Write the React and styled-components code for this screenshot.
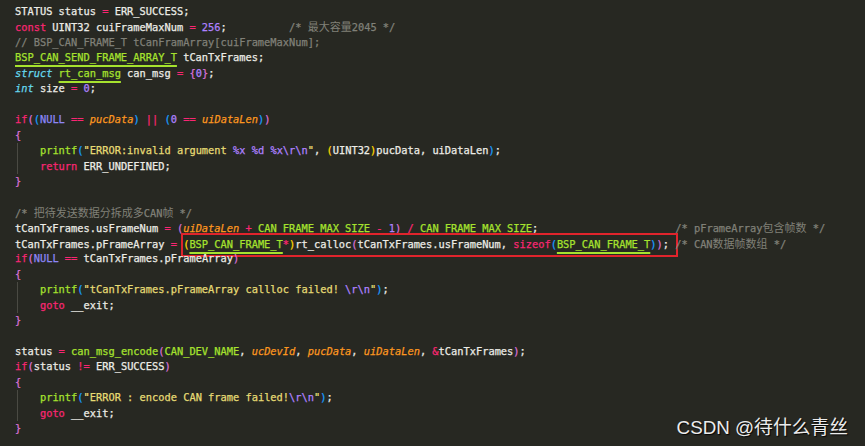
import React from 'react'
import styled, { createGlobalStyle } from 'styled-components'

const GlobalStyle = createGlobalStyle`
  html, body {
    margin: 0;
    padding: 0;
    background: #272822;
  }
`

const COLORS = {
  p: '#ecece6',
  k: '#f92672',
  n: '#ae81ff',
  c: '#808078',
  t: '#a6e22e',
  f: '#a6e22e',
  i: '#66d9ef',
  a: '#fd971f',
  s: '#e6db74',
  e: '#ae81ff',
  u: '#8c86f7',
  g: '#ffd700',
  o: '#da70d6',
  b: '#179fff',
}

// each line is a list of [kind, text]; 'box' wraps the tokens in the red frame
const code = [
  [['p', 'STATUS status '], ['k', '='], ['p', ' ERR_SUCCESS;']],
  [['k', 'const'], ['p', ' UINT32 cuiFrameMaxNum '], ['k', '='], ['p', ' '], ['n', '256'], ['p', ';          '], ['c', '/* 最大容量2045 */']],
  [['c', '// BSP_CAN_FRAME_T tCanFramArray[cuiFrameMaxNum];']],
  [['t', 'BSP_CAN_SEND_FRAME_ARRAY_T'], ['p', ' tCanTxFrames;']],
  [['i', 'struct'], ['p', ' '], ['t', 'rt_can_msg'], ['p', ' can_msg '], ['k', '='], ['p', ' '], ['o', '{'], ['n', '0'], ['o', '}'], ['p', ';']],
  [['i', 'int'], ['p', ' size '], ['k', '='], ['p', ' '], ['n', '0'], ['p', ';']],
  [],
  [['k', 'if'], ['o', '('], ['b', '('], ['u', 'NULL'], ['p', ' '], ['k', '=='], ['p', ' '], ['a', 'pucData'], ['b', ')'], ['p', ' '], ['k', '||'], ['p', ' '], ['b', '('], ['n', '0'], ['p', ' '], ['k', '=='], ['p', ' '], ['a', 'uiDataLen'], ['b', ')'], ['o', ')']],
  [['o', '{']],
  [['p', '    '], ['f', 'printf'], ['b', '('], ['s', '"ERROR:invalid argument '], ['e', '%x'], ['s', ' '], ['e', '%d'], ['s', ' '], ['e', '%x\\r\\n'], ['s', '"'], ['p', ', '], ['g', '('], ['p', 'UINT32'], ['g', ')'], ['p', 'pucData, uiDataLen'], ['b', ')'], ['p', ';']],
  [['p', '    '], ['k', 'return'], ['p', ' ERR_UNDEFINED;']],
  [['o', '}']],
  [],
  [['c', '/* 把待发送数据分拆成多CAN帧 */']],
  [['p', 'tCanTxFrames.usFrameNum '], ['k', '='], ['p', ' '], ['o', '('], ['a', 'uiDataLen'], ['p', ' '], ['k', '+'], ['p', ' '], ['f', 'CAN_FRAME_MAX_SIZE'], ['p', ' '], ['k', '-'], ['p', ' '], ['n', '1'], ['o', ')'], ['p', ' '], ['k', '/'], ['p', ' '], ['f', 'CAN_FRAME_MAX_SIZE'], ['p', ';' + ' '.repeat(22)], ['c', '/* pFrameArray包含帧数 */']],
  [['p', 'tCanTxFrames.pFrameArray '], ['k', '='], ['p', ' '],
    ['box', [['g', '('], ['t', 'BSP_CAN_FRAME_T'], ['k', '*'], ['g', ')'], ['p', 'rt_calloc'], ['o', '('], ['p', 'tCanTxFrames.usFrameNum, '], ['k', 'sizeof'], ['b', '('], ['t', 'BSP_CAN_FRAME_T'], ['b', ')'], ['o', ')'], ['p', ';']]],
    ['p', ' '], ['c', '/* CAN数据帧数组 */']],
  [['k', 'if'], ['o', '('], ['u', 'NULL'], ['p', ' '], ['k', '=='], ['p', ' tCanTxFrames.pFrameArray'], ['o', ')']],
  [['o', '{']],
  [['p', '    '], ['f', 'printf'], ['b', '('], ['s', '"tCanTxFrames.pFrameArray callloc failed! '], ['e', '\\r\\n'], ['s', '"'], ['b', ')'], ['p', ';']],
  [['p', '    '], ['k', 'goto'], ['p', ' __exit;']],
  [['o', '}']],
  [],
  [['p', 'status '], ['k', '='], ['p', ' '], ['f', 'can_msg_encode'], ['o', '('], ['f', 'CAN_DEV_NAME'], ['p', ', '], ['a', 'ucDevId'], ['p', ', '], ['a', 'pucData'], ['p', ', '], ['a', 'uiDataLen'], ['p', ', '], ['k', '&'], ['p', 'tCanTxFrames'], ['o', ')'], ['p', ';']],
  [['k', 'if'], ['o', '('], ['p', 'status '], ['k', '!='], ['p', ' ERR_SUCCESS'], ['o', ')']],
  [['o', '{']],
  [['p', '    '], ['f', 'printf'], ['b', '('], ['s', '"ERROR : encode CAN frame failed!'], ['e', '\\r\\n'], ['s', '"'], ['b', ')'], ['p', ';']],
  [['p', '    '], ['k', 'goto'], ['p', ' __exit;']],
  [['o', '}']],
]

const guides = new Set([9, 10, 18, 19, 25, 26])

function splitCjk(text) {
  return text.split(/([\u4e00-\u9fff]+)/).map((part, i) =>
    /[\u4e00-\u9fff]/.test(part) ? <Cjk key={i}>{part}</Cjk> : part
  )
}

function Tokens({ list }) {
  return list.map(([kind, text], i) =>
    kind === 'box'
      ? <Boxed key={i}><Tokens list={text} /></Boxed>
      : <Tok key={i} $k={kind}>{kind === 'c' ? splitCjk(text) : text}</Tok>
  )
}

export default function App() {
  return (
    <Screen>
      <GlobalStyle />
      <Editor>
        {code.map((line, i) => (
          <Line key={i} $guide={guides.has(i)}>
            <Tokens list={line} />
          </Line>
        ))}
      </Editor>
      <Mark>CSDN @待什么青丝</Mark>
    </Screen>
  )
}

const Screen = styled.div`
  position: relative;
  width: 865px;
  height: 446px;
  overflow: hidden;
  background: #272822;
`

const Editor = styled.div`
  padding: 4px 0 0 15px;
  font-family: "DejaVu Sans Mono", monospace;
  font-size: 10.35px;
  color: #ecece6;
  -webkit-text-stroke: 0.25px currentColor;
`

const Line = styled.div`
  height: 15.46px;
  line-height: 15.46px;
  white-space: pre;
  margin-left: -15px;
  padding-left: 15px;
  background-image: ${p => p.$guide ? 'linear-gradient(#4a4a43, #4a4a43)' : 'none'};
  background-size: 1px 100%;
  background-position: 17px 0;
  background-repeat: no-repeat;
`

const Tok = styled.span`
  color: ${p => COLORS[p.$k]};
  font-style: ${p => (p.$k === 'i' || p.$k === 'a') ? 'italic' : 'normal'};
  text-decoration: ${p => p.$k === 't' ? 'underline' : 'none'};
  text-decoration-color: #a6e22e;
  text-decoration-thickness: 1.5px;
  text-underline-offset: 3.5px;
  text-decoration-skip-ink: none;
`

const Cjk = styled.span`
  font-family: "Noto Sans CJK SC", sans-serif;
  font-size: 11px;
  -webkit-text-stroke: 0;
`

const Boxed = styled.span`
  border: 2px solid #e0242c;
  padding: 3px 7px 5px 0;
  margin: 0 -9px 0 -2px;
`

const Mark = styled.div`
  position: absolute;
  right: 17px;
  bottom: 8px;
  font-family: "Liberation Sans", "Noto Sans CJK SC", sans-serif;
  font-size: 18.8px;
  line-height: 20px;
  color: #ececec;
  text-shadow: 1px 1px 1px rgba(0, 0, 0, 0.9);
`
